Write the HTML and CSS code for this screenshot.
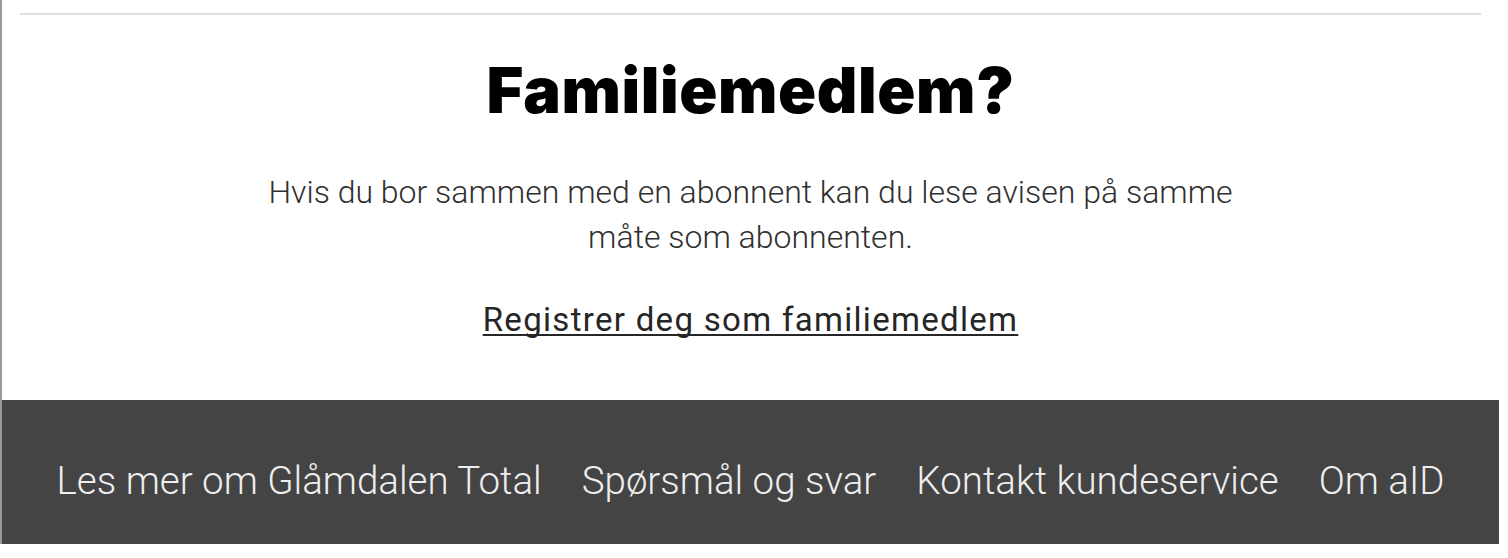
FILE: index.html
```html
<!DOCTYPE html>
<html lang="no">
<head>
<meta charset="utf-8">
<title>Familiemedlem</title>
<link rel="stylesheet" href="styles.css">
</head>
<body>
<div class="page">
  <main class="content">
    <hr class="rule">
    <h1 class="title">Familiemedlem?</h1>
    <p class="lead">Hvis du bor sammen med en abonnent kan du lese avisen på samme måte som abonnenten.</p>
    <a class="register" href="#">Registrer deg som familiemedlem</a>
  </main>
  <footer class="footer">
    <nav class="footer-nav">
      <a href="#">Les mer om Glåmdalen Total</a>
      <a href="#">Spørsmål og svar</a>
      <a href="#">Kontakt kundeservice</a>
      <a href="#">Om aID</a>
    </nav>
  </footer>
</div>
</body>
</html>
```
FILE: styles.css
```css
html, body {
  margin: 0;
  padding: 0;
  background: #fff;
}
body {
  font-family: Roboto, "Liberation Sans", sans-serif;
}
.page {
  width: 1497px;
  border-left: 2px solid #9a9a9a;
  height: 544px;
  display: flex;
  flex-direction: column;
}
.content {
  flex: 1;
  display: flex;
  flex-direction: column;
  align-items: center;
  padding-top: 13px;
}
.rule {
  align-self: stretch;
  margin: 0 18px 0 18px;
  border: 0;
  height: 2px;
  background: #dedede;
}
.title {
  margin: 37px 0 0;
  font-family: Inter, "DejaVu Sans", sans-serif;
  font-weight: 900;
  font-size: 63px;
  line-height: 76px;
  letter-spacing: 0.6px;
  color: #000;
}
.lead {
  margin: 42px 0 0;
  width: 1000px;
  text-align: center;
  font-weight: 300;
  font-size: 32px;
  line-height: 45px;
  color: #303030;
}
.register {
  margin-top: 40px;
  font-size: 33px;
  line-height: 40px;
  letter-spacing: 1.3px;
  color: #262626;
  text-decoration: underline;
  text-underline-offset: 3px;
  text-decoration-thickness: 2px;
  text-decoration-skip-ink: none;
}
.footer {
  height: 144px;
  box-sizing: border-box;
  padding-top: 59px;
  background: #444;
  display: flex;
  align-items: flex-start;
  justify-content: center;
}
.footer-nav {
  display: flex;
  gap: 40px;
}
.footer-nav a {
  color: #eeeeee;
  text-decoration: none;
  font-weight: 300;
  font-size: 38.5px;
  line-height: 44px;
}
```
